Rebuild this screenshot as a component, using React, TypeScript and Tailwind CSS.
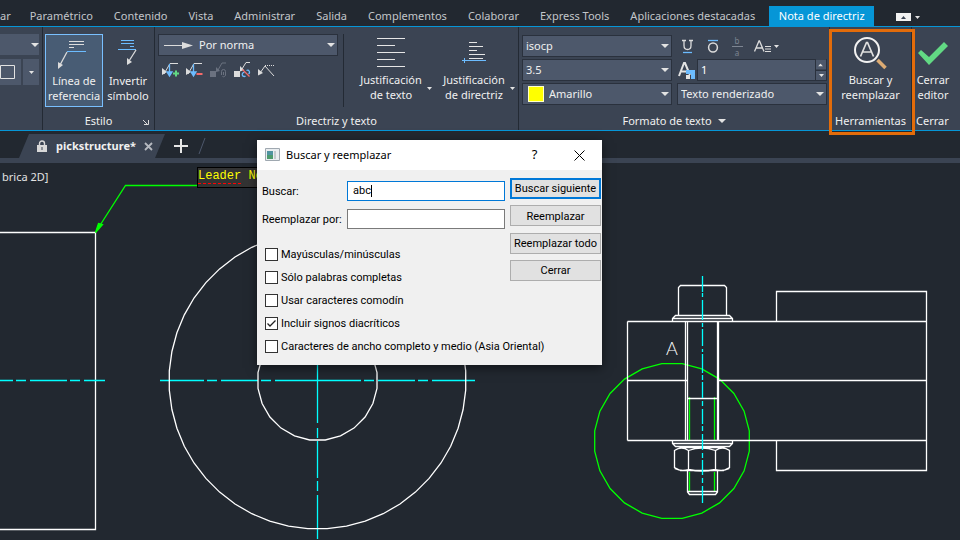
import { useState } from 'react'
import type { ReactNode, SelectHTMLAttributes } from 'react'
import clsx from 'clsx'

const MENU = [
  'Paramétrico', 'Contenido', 'Vista', 'Administrar', 'Salida',
  'Complementos', 'Colaborar', 'Express Tools', 'Aplicaciones destacadas',
]

const OPTIONS = [
  { id: 'case', label: 'Mayúsculas/minúsculas' },
  { id: 'whole', label: 'Sólo palabras completas' },
  { id: 'wildcard', label: 'Usar caracteres comodín' },
  { id: 'accents', label: 'Incluir signos diacríticos' },
  { id: 'width', label: 'Caracteres de ancho completo y medio (Asia Oriental)' },
]

// closed polygon, vertices offset by half a step so the sides sit flat on the axes
const ring = (cx: number, cy: number, r: number, sides: number) =>
  Array.from({ length: sides }, (_, i) => {
    const a = ((i + 0.5) * 2 * Math.PI) / sides
    return `${(cx + r * Math.cos(a)).toFixed(1)},${(cy + r * Math.sin(a)).toFixed(1)}`
  }).join(' ')

export default function App() {
  return (
    <div className="relative flex h-screen flex-col overflow-hidden bg-[#222830] font-['Noto_Sans',sans-serif] text-[11px] text-[#f0f0f0]">
      <MenuBar />
      <Ribbon />
      <DocumentTabs />
      <Canvas />
      <FindDialog />
    </div>
  )
}

function MenuBar() {
  return (
    <nav className="flex h-[27px] shrink-0 items-end gap-[21px] whitespace-nowrap border-b border-[#0696d7] text-[#c3c6ca]">
      <button className="-mr-0.5 h-5">ar</button>
      {MENU.map((m) => (
        <button key={m} className="h-5">{m}</button>
      ))}
      <div className="-ml-[7px] flex items-end">
        <button className="h-5 w-[105px] bg-[#0696d7] text-white">Nota de directriz</button>
        <button aria-label="Minimizar cinta" className="mb-[5px] ml-[22px] flex h-2 w-[15px] items-center justify-center bg-[#f2f2f2]">
          <svg className="h-[3px] w-[5px]" viewBox="0 0 5 3"><path d="M0 3 2.5 0 5 3z" fill="#3b4453" /></svg>
        </button>
        <button aria-label="Opciones de cinta" className="mb-[7px] ml-1"><Caret small /></button>
      </div>
    </nav>
  )
}

function Ribbon() {
  return (
    <div className="flex h-[104px] shrink-0 border-b border-[#0696d7] bg-[#3b4453]">
      <section className="w-[43px] shrink-0 border-r border-[#232a34] pt-[7px]">
        <button aria-label="Estilo actual" className="flex h-[21px] w-[39px] items-center justify-end bg-[#4d586b]"><Caret /></button>
        <div className="mt-1 flex gap-0.5">
          <button aria-label="Marco" className="h-[26px] w-[21px] bg-[#4d586b]">
            <svg className="h-[26px] w-[21px]" fill="none" stroke="#e3e3e3"><path d="M.5 6.5h14v13H.5z" /></svg>
          </button>
          <button aria-label="Más marcos" className="flex h-[26px] w-4 items-center justify-center bg-[#4d586b]"><Caret small /></button>
        </div>
      </section>

      <Panel title="Estilo" className="w-28 border-r" launcher>
        <div className="flex gap-0.5 pl-0.5 pt-[7px]">
          <BigButton lines={['Línea de', 'referencia']} className="w-[58px] border border-[#79c0ff] bg-[#485c74]"><LeaderIcon /></BigButton>
          <BigButton lines={['Invertir', 'símbolo']} className="w-[46px] border border-transparent"><InvertIcon /></BigButton>
        </div>
      </Panel>

      <Panel title="Directriz y texto" className="w-[364px] border-r">
        <div className="flex pt-[7px]">
          <div className="w-[189px] border-r border-[#232a34] pl-[3px]">
            <div className="relative">
              <svg className="pointer-events-none absolute left-1.5 top-1.5 h-2.5 w-[30px]" fill="none">
                <path d="M0 5.500h18" stroke="#dcdcdc" /><path d="M18 2v7l11-3.500z" fill="#dcdcdc" />
              </svg>
              <Drop aria-label="Punta de flecha" className="w-[180px]" pad="pl-10"><option>Por norma</option></Drop>
            </div>
            <div className="mt-1 flex gap-1 pl-1">
              <ToolButton label="Añadir directriz">
                <path d="M2 12 8 1.500h8" stroke="#dcdcdc" /><path d="M0 13V6l5 4z" fill="#dcdcdc" />
                <path d="M7.500 2v10M5 10l2.500 4L10 10z" stroke="#6cbcff" strokeWidth="1.300" fill="#6cbcff" /><path d="M11 11.500h6M14 8.500v6" stroke="#62d984" strokeWidth="2" />
              </ToolButton>
              <ToolButton label="Quitar directriz">
                <path d="M2 12 8 1.500h8" stroke="#dcdcdc" /><path d="M0 13V6l5 4z" fill="#dcdcdc" />
                <path d="M7.500 2v10M5 10l2.500 4L10 10z" stroke="#6cbcff" strokeWidth="1.300" fill="#6cbcff" /><path d="M10.500 12h6" stroke="#f46a6a" strokeWidth="2" />
              </ToolButton>
              <ToolButton label="Enlazar">
                <path d="M0 9h6v6H0z" fill="#6b7280" /><path d="M16 1h-4L8 8" stroke="#6b7280" /><path d="M6 10V5l4 4z" fill="#6b7280" />
                <path d="M11.500 13V9.500a2 2 0 0 1 4 0V13a2 2 0 0 1-3 1.500M13.500 10v3" stroke="#6b7280" />
              </ToolButton>
              <ToolButton label="Desenlazar">
                <path d="M0 9h6v6H0z" fill="#dcdcdc" /><path d="M16 .500h-4L8 7" stroke="#dcdcdc" /><path d="M6 9.500V4l4 4z" fill="#dcdcdc" />
                <path d="M10.500 10.500a2 2 0 1 0 1 3.500M12.500 8.500a2 2 0 1 1 2 3.500" stroke="#6cbcff" strokeWidth="1.300" /><path d="m8.500 7.500 7 7" stroke="#f46a6a" strokeWidth="1.300" />
              </ToolButton>
              <ToolButton label="Alinear directrices">
                <path d="m2 11 5-7 9 10" stroke="#dcdcdc" /><path d="M0 13.500V7l5 4z" fill="#dcdcdc" /><path d="M7 3.500h9" stroke="#dcdcdc" strokeDasharray="1 1" />
              </ToolButton>
            </div>
          </div>
          <div className="flex gap-[11px] pl-3.5">
            <BigButton lines={['Justificación', 'de texto']} className="w-[72px] pr-1.5" caret>
              <path d="M19 4.500h28M19 11.500h18M19 18.500h28M19 25.500h18M19 32.500h28" stroke="#e6e6e6" />
            </BigButton>
            <BigButton lines={['Justificación', 'de directriz']} className="w-[72px] pr-1.5" caret>
              <path d="M28 8.500h8M28 12.500h14M28 16.500h8M28 20.500h16M28 24.500h14" stroke="#e6e6e6" />
              <path d="M21 26.500h24M23.500 24v5" stroke="#6cbcff" />
            </BigButton>
          </div>
        </div>
      </Panel>

      <Panel title="Formato de texto" className="w-[311px] border-r" caret>
        <div className="flex gap-[5px] pl-[3px] pt-2">
          <div className="flex flex-col gap-0.5">
            <Drop aria-label="Fuente" className="w-[150px]"><option>isocp</option></Drop>
            <Drop aria-label="Altura de texto" className="w-[150px]"><option>3.5</option></Drop>
            <div className="relative">
              <span className="pointer-events-none absolute left-1.5 top-[3px] size-4 border border-white/80 bg-[#ffff00]" />
              <Drop aria-label="Color" className="w-[150px]" pad="pl-[26px]"><option>Amarillo</option></Drop>
            </div>
          </div>
          <div className="flex flex-col gap-0.5">
            <FormatButtons />
            <div className="flex h-[22px] items-center">
              <svg className="h-[18px] w-5" fill="none">
                <path d="m2 15 5-13h1l5 12M4 10.500h7" stroke="#e3e3e3" strokeWidth="2" /><path d="M9 9h9v9h-4v-5H9z" fill="#6cbcff" /><path d="M9 14h4v4H9z" fill="#e3e3e3" />
              </svg>
              <div className="flex h-[22px] w-[130px] border border-[#2a313d] bg-[#4d586b]">
                <input aria-label="Factor de anchura" defaultValue="1" className="min-w-0 flex-1 bg-transparent pl-[3px] text-white outline-none" />
                <div className="flex w-[11px] flex-col gap-px border-l border-[#2a313d] bg-[#2a313d]">
                  <button aria-label="Aumentar" className="flex flex-1 rotate-180 items-center justify-center bg-[#4d586b]"><Caret small /></button>
                  <button aria-label="Reducir" className="flex flex-1 items-center justify-center bg-[#4d586b]"><Caret small /></button>
                </div>
              </div>
            </div>
            <Drop aria-label="Texto renderizado" className="w-[150px]"><option>Texto renderizado</option></Drop>
          </div>
        </div>
      </Panel>

      <div className="relative flex">
        <Panel title="Herramientas" className="w-[82px] border-r">
          <BigButton lines={['Buscar y', 'reemplazar']} className="mt-[7px] w-full">
            <circle cx="37" cy="16" r="12" stroke="#f2f2f2" strokeWidth="2" />
            <path d="m30.500 22.500 6-14h1l6 14M33 18h8.500" stroke="#e0e0e0" strokeWidth="1.700" /><path d="m47.500 26 8 8" stroke="#dcab73" strokeWidth="3.500" />
          </BigButton>
        </Panel>
        <span className="pointer-events-none absolute -left-px top-0.5 h-[106px] w-[86px] border-3 border-[#e36c0a]" />
      </div>

      <Panel title="Cerrar" className="w-[42px] grow items-start pl-1">
        <BigButton lines={['Cerrar', 'editor']} className="mt-[7px] w-[34px]">
          <path d="m2 19 3-3 8 7L28 8l4 4-19 19z" fill="#62d984" />
        </BigButton>
      </Panel>
    </div>
  )
}

function Panel({ title, className, caret, launcher, children }: { title: string; className: string; caret?: boolean; launcher?: boolean; children: ReactNode }) {
  return (
    <section className={clsx('relative flex shrink-0 flex-col border-[#232a34]', className)}>
      <div className="h-[85px] self-stretch">{children}</div>
      <h2 className="flex h-[18px] items-center justify-center gap-1.5">{title}{caret && <Caret />}</h2>
      {launcher && (
        <button aria-label={`Opciones de ${title}`} className="absolute bottom-1 right-1 size-2">
          <svg className="size-2" fill="none" stroke="#dcdcdc"><path d="m1 2 4 4M6.500 2v4.500H2" /></svg>
        </button>
      )}
    </section>
  )
}

// svg children are drawn in a 38px tall strip above the two label lines
function BigButton({ lines, className, caret, children }: { lines: string[]; className: string; caret?: boolean; children: ReactNode }) {
  return (
    <button className={clsx('relative flex h-[73px] flex-col items-center whitespace-nowrap leading-[15px]', className)}>
      <svg className="h-[38px] w-full shrink-0 overflow-visible" fill="none">{children}</svg>
      {lines.map((l) => <span key={l}>{l}</span>)}
      {caret && <span className="absolute -right-0.5 bottom-[17px]"><Caret small /></span>}
    </button>
  )
}

function ToolButton({ label, children }: { label: string; children: ReactNode }) {
  return (
    <button aria-label={label} className="size-5">
      <svg className="h-4 w-[18px]" fill="none">{children}</svg>
    </button>
  )
}

function Caret({ small }: { small?: boolean }) {
  return small
    ? <svg className="h-[3px] w-[5px]" viewBox="0 0 5 3"><path d="M0 0h5L2.500 3z" fill="#e3e3e3" /></svg>
    : <svg className="h-1 w-2" viewBox="0 0 8 4"><path d="M0 0h8L4 4z" fill="#e3e3e3" /></svg>
}

function Drop({ className, pad = 'pl-[3px]', children, ...rest }: SelectHTMLAttributes<HTMLSelectElement> & { pad?: string }) {
  return (
    <div className={clsx('flex h-[22px] items-center border border-[#2a313d] bg-[#4d586b]', className)}>
      <select {...rest} className={clsx('h-full min-w-0 flex-1 appearance-none text-[#f0f0f0] outline-none', pad)}>{children}</select>
      <span className="pointer-events-none mr-0.5 flex"><Caret /></span>
    </div>
  )
}

function FormatButtons() {
  return (
    <div className="flex h-[22px] items-center gap-1 pl-[3px]">
      <button aria-label="Subrayado"><svg className="h-4 w-[18px]" fill="none"><path d="M2 2.500h4M9 2.500h4M4 2.500v5q0 4 3.500 4T11 7.500v-5" stroke="#dcdcdc" strokeWidth="1.300" /><path d="M3 14.500h9" stroke="#6cbcff" strokeWidth="1.300" /></svg></button>
      <button aria-label="Sobrerrayado"><svg className="ml-1 h-4 w-[18px]" fill="none"><path d="M2 2.500h10" stroke="#6cbcff" strokeWidth="1.300" /><ellipse cx="7" cy="9.500" rx="4.400" ry="4.400" stroke="#dcdcdc" strokeWidth="1.500" /></svg></button>
      <button aria-label="Apilar" className="flex w-[18px] flex-col items-center text-[8px] leading-[11px] text-[#7d8592]">
        <span className="w-[11px] border-b border-[#7d8592]">b</span><span>a</span>
      </button>
      <button aria-label="Mayúsculas" className="ml-1 flex items-center gap-0.5"><svg className="h-4 w-[18px]" fill="none"><path d="M.5 13.500 5 3h.5L10 13.500M2 10h6.500" stroke="#dcdcdc" strokeWidth="1.300" /><path d="M11 8.500h6M11 11h6M11 13.500h6" stroke="#dcdcdc" /></svg><Caret small /></button>
    </div>
  )
}

function LeaderIcon() {
  return (
    <>
      <path d="M23 6.500h15M23 9.500h15M23 12.500h5" stroke="#dcdcdc" />
      <path d="M21 16.500h19" stroke="#6cbcff" />
      <path d="m21 17-7 13" stroke="#dcdcdc" strokeWidth="1.300" /><path d="M12 34v-7l5 3z" fill="#dcdcdc" />
    </>
  )
}

function InvertIcon() {
  return (
    <>
      <path d="M15 5.500h13M15 8.500h13M24 11.500h4M12 14.500h18" stroke="#6cbcff" />
      <path d="m30 15-7 11" stroke="#dcdcdc" strokeWidth="1.300" /><path d="M21 30v-7l5 4z" fill="#dcdcdc" />
    </>
  )
}

function DocumentTabs() {
  return (
    <div className="flex h-8 shrink-0 items-end border-b-5 border-[#3b4453]">
      <div className="ml-[19px] flex h-6 w-[146px] items-center bg-[#3b4453] pl-[18px] pr-3 [clip-path:polygon(10px_0,100%_0,136px_100%,0_100%)]">
        <svg className="mr-[9px] h-3 w-2.5" fill="none"><path d="M2.500 6V3.500a2.500 2.500 0 0 1 5 0V6" stroke="#d8d8d8" strokeWidth="1.400" /><path d="M0 5h10v7H0z" fill="#d8d8d8" /><path d="M4.500 7h1v3h-1z" fill="#3b4453" /></svg>
        <span className="font-bold">pickstructure*</span>
        <button aria-label="Cerrar pickstructure" className="ml-auto flex"><svg className="size-[9px]" stroke="#b5b9c0" strokeWidth="1.800"><path d="m1 1 7 7M8 1 1 8" /></svg></button>
      </div>
      <button aria-label="Nuevo dibujo" className="mb-[5px] ml-[9px]"><svg className="size-3.5" stroke="#e6e6e6" strokeWidth="2"><path d="M0 7h14M7 0v14" /></svg></button>
      <svg className="mb-1 ml-2.5 h-4 w-2" stroke="#4d586b"><path d="M7 0 1 16" /></svg>
    </div>
  )
}

function Canvas() {
  return (
    <main className="relative flex-1 overflow-hidden">
      <p className="pl-0.5 pt-[6px] text-[#e3e3e3]">brica 2D]</p>
      <svg className="absolute left-0 top-0 h-[377px] w-[960px]" viewBox="0 163 960 377" fill="none" stroke="#fff" strokeWidth="1.300">
        <path d="M0 232.500h95.500v297H0" />
        <g stroke="#00ffff">
          <path d="M0 380.500h13M16 380.500h10M30 380.500h37M70 380.500h10M84 380.500h21" />
          <path d="M160 380.500h44M207 380.500h10M221 380.500h37M261 380.500h10M275 380.500h86M364 380.500h10M378 380.500h37M418 380.500h10M432 380.500h43" />
          <path d="M317.500 365v58M317.500 428v10M317.500 441v37M317.500 481v10M317.500 495v44" />
        </g>
        <polygon points={ring(317.5, 380.5, 148.5, 48)} />
        <polygon points={ring(317.5, 380.5, 60, 24)} />

        <g stroke="#00ff00">
          <path d="M197 185.500h-71.500L97 230" />
          <path d="m95.500 232.500 3-9 4 1z" fill="#00ff00" />
          <polygon points={ring(672, 441, 78, 24)} />
          <path d="M689.500 397v43M714.500 397v43M689.500 472v20M714.500 472v20" />
        </g>

        {/* plates */}
        <path d="M776.500 321.500v-30h150v179h-150v-30M627.500 321.500h299M627.500 440.500h299M627.500 321.500v119M627.500 380.500h60M718.500 380.500h208" />
        {/* bolt */}
        <path d="M685.500 321.500v119M687.500 321.500v119M717.500 321.500v119M718.500 321.500v119M687.500 398.500h30" />
        <path d="M678.500 315.500v-28l2-2h44l2 2v28M672.500 321v-2.500l3-3h54l3 3v2.500M672.500 318.500h60" />
        <path d="M672.500 441v2.500l3 3h54l3-3V441M672.500 443.500h60" />
        {/* nut */}
        <path d="M674.500 450.500l6-3h43l6 3v17l-6 3h-43l-6-3zM688.500 450v19M715.500 450v19M674.500 450.500q7-5 14 0 13-5 27 0 7-5 14 0M674.500 468.500q7 3 14 1 13 3 27 0 7 2 14-1" />
        <path d="M687.500 471v21l2 2.500h26l2-2.500v-21M687.500 491.500h30" />
        <path d="M702.500 276v16M702.500 293v4M702.500 300v20M702.500 323v4M702.500 329v17M702.500 349v3M702.500 354v19M702.500 375v5M702.500 382v16M702.500 401v5M702.500 409v15M702.500 426v5M702.500 434v16M702.500 453v5M702.500 460v15M702.500 478v5M702.500 486v17" stroke="#00ffff" />
        <text x="666" y="355" fill="#fff" stroke="none" className="font-['Lato',sans-serif] text-[18px] font-light">A</text>
      </svg>
      <p className="absolute left-[197px] top-1 h-[21px] w-[120px] border border-black bg-[#333333] font-['Liberation_Mono',monospace] text-[12px] leading-4 text-[#ffff00]">
        <span className="underline decoration-[#ff0000] decoration-dashed decoration-1 underline-offset-4">Leader</span> No
      </p>
    </main>
  )
}

function FindDialog() {
  const [query, setQuery] = useState('abc')
  const [replacement, setReplacement] = useState('')
  const [checked, setChecked] = useState<Record<string, boolean>>({ accents: true })

  return (
    <div role="dialog" aria-labelledby="find-title" className="absolute left-[257px] top-[140px] w-[345px] bg-[#f0f0f0] text-black shadow-[0_3px_10px_rgba(0,0,0,0.5)]">
      <header className="flex h-[30px] items-center bg-white pl-2">
        <svg className="h-[14px] w-[15px]"><path d="M.5.500h14v12H.500z" fill="#e9edf0" stroke="#9fa8b0" /><path d="M2 3h6v8H2z" fill="#4f93a0" /><path d="M2 7h6v4H2z" fill="#4c9a6d" /><path d="M9 3h2v8H9z" fill="#c3c9cd" /></svg>
        <h1 id="find-title" className="ml-1.5 flex-1">Buscar y reemplazar</h1>
        <button aria-label="Ayuda" className="w-[45px] text-[13px]">?</button>
        <button aria-label="Cerrar" className="flex w-[45px] justify-center"><svg className="size-[11px]" stroke="#000"><path d="m.5.500 10 10M10.500.500l-10 10" /></svg></button>
      </header>
      <form className="flex h-[195px] gap-[5px] pl-[5px] pr-px font-['Roboto',sans-serif]" onSubmit={(e) => e.preventDefault()}>
        <div className="min-w-0 flex-1 pt-[11px]">
          <div className="grid grid-cols-[85px_1fr] items-center gap-y-2">
            <label htmlFor="query" className="pt-0.5">Buscar:</label>
            <div className="flex h-5 items-center border border-[#0078d7] bg-white pl-[5px]">
              <input id="query" value={query} onChange={(e) => setQuery(e.target.value)} className="field-sizing-content outline-none" />
              <span className="h-3 w-px bg-black" />
            </div>
            <label htmlFor="replacement" className="whitespace-nowrap pt-0.5">Reemplazar por:</label>
            <input id="replacement" value={replacement} onChange={(e) => setReplacement(e.target.value)} className="h-5 w-full min-w-0 border border-[#7a7a7a] bg-white px-[5px] outline-none" />
          </div>
          <div className="mt-3.5 flex flex-col pl-[3px]">
            {OPTIONS.map((o) => (
              <label key={o.id} className="flex h-[23px] items-center gap-[3px] whitespace-nowrap">
                <span className="relative flex">
                  <input type="checkbox" checked={!!checked[o.id]} onChange={(e) => setChecked({ ...checked, [o.id]: e.target.checked })} className="size-[13px] appearance-none border border-[#333333] bg-white" />
                  {checked[o.id] && <svg className="pointer-events-none absolute inset-0 size-[13px]" fill="none" stroke="#222" strokeWidth="1.300"><path d="m2.500 6.500 2.500 2.500 5.500-5.500" /></svg>}
                </span>
                <span className="pt-0.5">{o.label}</span>
              </label>
            ))}
          </div>
        </div>
        <div className="mt-2 flex h-[103px] w-[91px] shrink-0 flex-col justify-between">
          <DialogButton primary>Buscar siguiente</DialogButton>
          <DialogButton>Reemplazar</DialogButton>
          <DialogButton>Reemplazar todo</DialogButton>
          <DialogButton>Cerrar</DialogButton>
        </div>
      </form>
    </div>
  )
}

function DialogButton({ primary, children }: { primary?: boolean; children: ReactNode }) {
  return (
    <button className={clsx('flex h-[21px] items-center justify-center whitespace-nowrap bg-[#e1e1e1] pt-0.5', primary ? 'border-2 border-[#0078d7]' : 'border border-[#adadad]')}>
      {children}
    </button>
  )
}
